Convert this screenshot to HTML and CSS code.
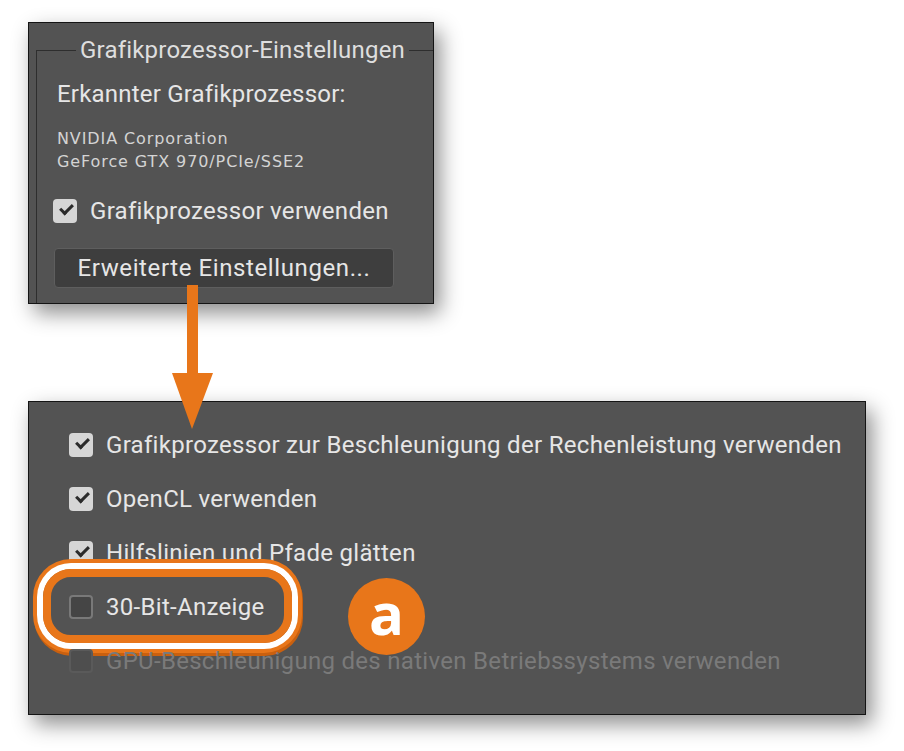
FILE: index.html
```html
<!DOCTYPE html>
<html lang="de">
<head>
    <meta charset="UTF-8">
    <meta name="viewport" content="width=device-width, initial-scale=1.0">
    <title>Grafikprozessor-Einstellungen</title>
    <link rel="stylesheet" href="styles.css">
</head>
<body>
    <div class="page">
        <div class="panel panel-top">
            <fieldset class="group">
                <legend>Grafikprozessor-Einstellungen</legend>
                <p class="label">Erkannter Grafikprozessor:</p>
                <p class="gpu-name">NVIDIA Corporation<br>GeForce GTX 970/PCIe/SSE2</p>
                <div class="row">
                    <span class="box checked"></span>
                    <span>Grafikprozessor verwenden</span>
                </div>
                <button class="btn">Erweiterte Einstellungen...</button>
            </fieldset>
        </div>

        <div class="panel panel-bottom">
            <div class="row">
                <span class="box checked"></span>
                <span>Grafikprozessor zur Beschleunigung der Rechenleistung verwenden</span>
            </div>
            <div class="row">
                <span class="box checked"></span>
                <span>OpenCL verwenden</span>
            </div>
            <div class="row">
                <span class="box checked"></span>
                <span>Hilfslinien und Pfade glätten</span>
            </div>
            <div class="row marked">
                <span class="ring"></span>
                <span class="box"></span>
                <span>30-Bit-Anzeige</span>
            </div>
            <div class="row disabled">
                <span class="box"></span>
                <span>GPU-Beschleunigung des nativen Betriebssystems verwenden</span>
            </div>
            <span class="badge">a</span>
        </div>

        <!-- pfeil vom button zum dialog -->
        <svg class="arrow" width="46" height="146" viewBox="0 0 46 146">
            <rect x="17" y="0" width="11" height="90" fill="#e8761a"/>
            <polygon points="2,88 43,88 22,144" fill="#e8761a"/>
        </svg>
    </div>
</body>
</html>
```

FILE: styles.css
```css
body {
    margin: 0;
    background: #fff;
    font-family: Roboto, "Liberation Sans", sans-serif;
}
.page {
    position: relative;
    width: 904px;
    height: 751px;
    padding: 22px 0 0 28px;
    box-sizing: border-box;
}
.panel {
    background: #535353;
    border: 1px solid #141414;
    box-shadow: 6px 9px 20px rgba(0, 0, 0, 0.45);
    color: #e6e6e6;
    box-sizing: border-box;
    overflow: hidden;
    letter-spacing: 0.3px;
}
.panel-top {
    width: 406px;
    height: 282px;
}
.group {
    margin: 13px 0 0 7px;
    padding: 0 0 0 20px;
    border: 1px solid #2e2e2e;
    border-right: 0;
    border-bottom: 0;
    min-width: 0;
}
.group legend {
    margin-left: 19px;
    padding: 0 4px;
    font-size: 24px;
    line-height: 28px;
    color: #dedede;
    letter-spacing: 0.2px;
}
.label {
    margin: 16px 0 0;
    font-size: 24px;
    line-height: 28px;
    letter-spacing: 0.2px;
}
.gpu-name {
    margin: 19px 0 0;
    font-family: "DejaVu Sans", sans-serif;
    font-size: 16px;
    line-height: 23px;
    letter-spacing: 0.9px;
    color: #d4d4d4;
}
.row {
    display: flex;
    align-items: center;
    gap: 13px;
    height: 54px;
    font-size: 24px;
    position: relative;
}
.panel-top .row {
    height: 28px;
    margin: 24px 0 0 -4px;
}
.box {
    width: 24px;
    height: 24px;
    border-radius: 4px;
    box-sizing: border-box;
    background: #454545;
    border: 2px solid #797979;
    flex: none;
    position: relative;
}
.box.checked {
    background: #d6d6d6;
    border: 0;
}
.box.checked::after {
    content: "";
    position: absolute;
    left: 7px;
    top: 5px;
    width: 10px;
    height: 5px;
    border-left: 3px solid #2b2b2b;
    border-bottom: 3px solid #2b2b2b;
    transform: rotate(-45deg);
}
.btn {
    display: block;
    margin: 23px 0 15px -3px;
    width: 340px;
    height: 40px;
    background: #3e3e3e;
    border: 1px solid #5e5e5e;
    border-radius: 4px;
    color: #e6e6e6;
    font-family: inherit;
    font-size: 24px;
    letter-spacing: 0.6px;
    padding: 0;
}
.panel-bottom {
    position: relative;
    width: 838px;
    height: 314px;
    margin-top: 97px;
    padding: 16px 0 0 40px;
}
.disabled {
    color: #7a7a7a;
}
.disabled .box {
    background: #4e4e4e;
    border-color: #5a5a5a;
}
.ring {
    position: absolute;
    left: -26px;
    top: -11px;
    width: 249px;
    height: 74px;
    box-sizing: border-box;
    border: 8px solid #e8761a;
    border-radius: 28px;
    box-shadow: 0 0 0 6px #fff, 0 0 0 10px #e8761a, 1px 3px 0 10px #c9600f;
}
.marked .box,
.marked span:last-child {
    position: relative;
}
.badge {
    position: absolute;
    left: 319px;
    top: 176px;
    width: 77px;
    height: 77px;
    border-radius: 50%;
    background: #e8761a;
    color: #fff;
    font-family: "Open Sans", sans-serif;
    font-weight: 700;
    font-size: 58px;
    line-height: 70px;
    letter-spacing: 0;
    text-align: center;
}
.arrow {
    position: absolute;
    left: 170px;
    top: 285px;
}
```
